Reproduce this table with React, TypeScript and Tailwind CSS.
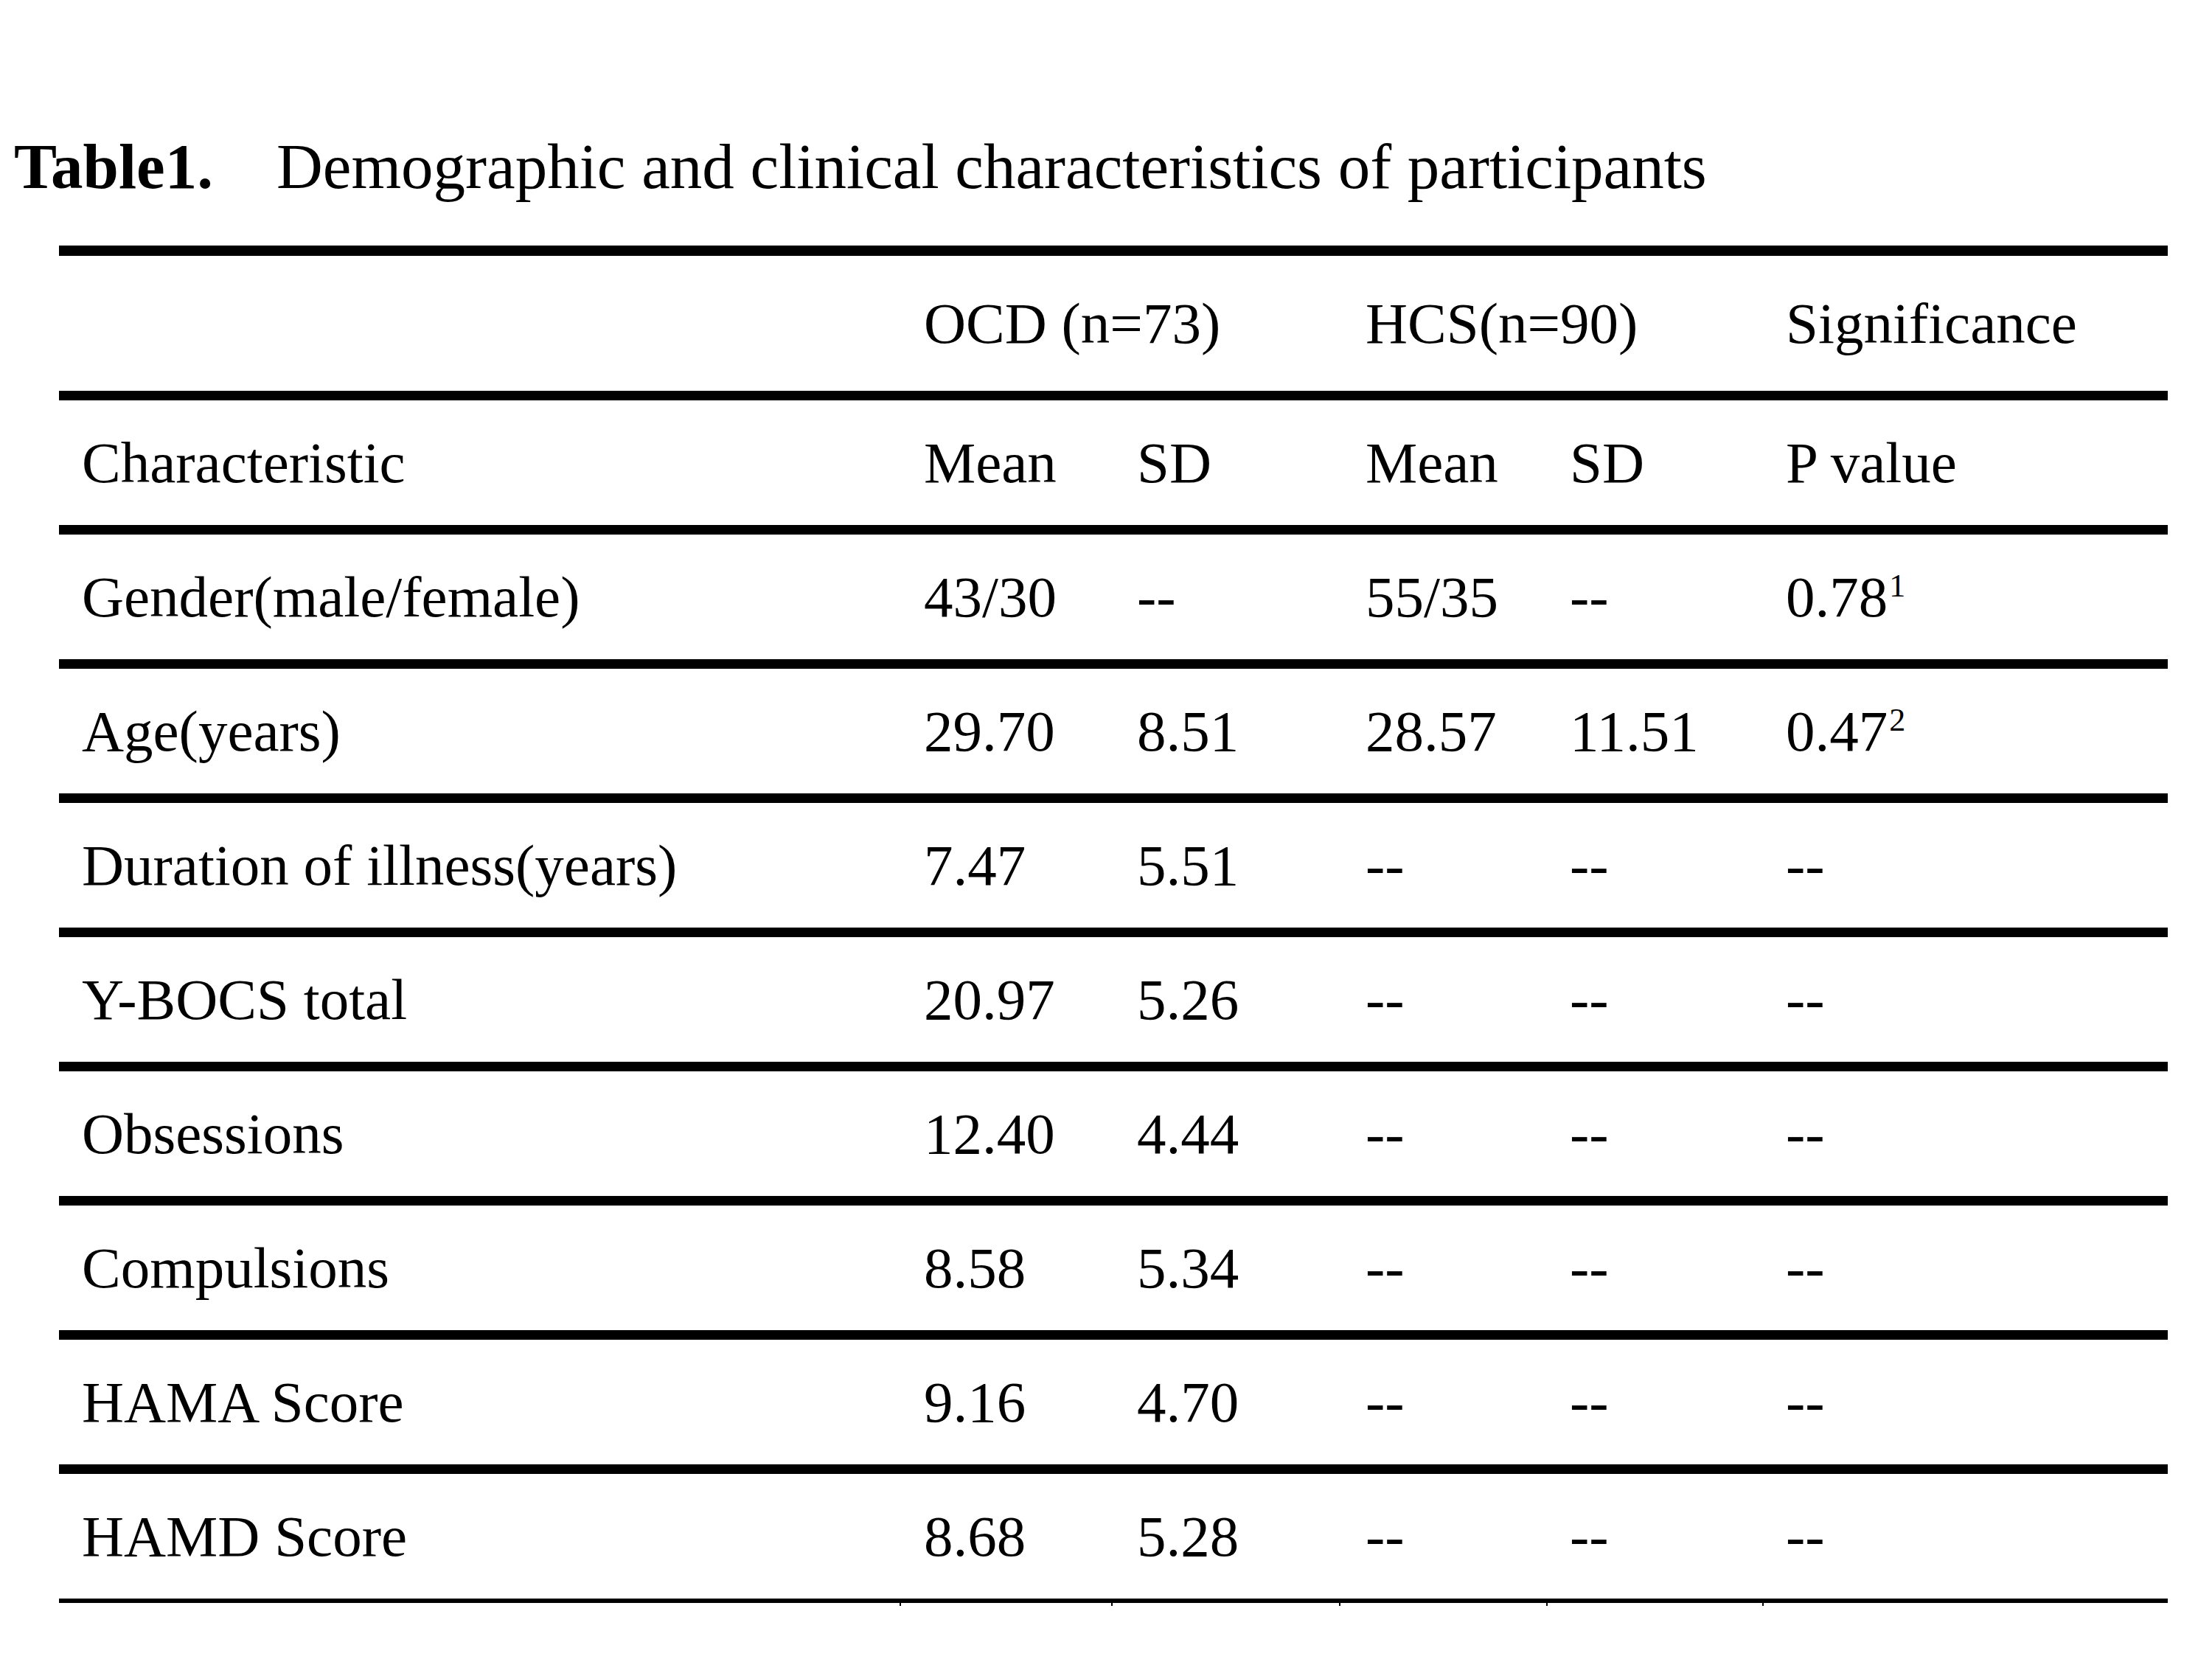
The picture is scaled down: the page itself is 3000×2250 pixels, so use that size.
import type { ReactNode } from 'react'

type Row = { label: string; cells: ReactNode[] }

const pad = ['pl-[31px]', 'pl-[33px]', 'pl-[35px]', 'pl-[36px]', 'pl-[32px]', 'pl-[32px]']

function Sup({ n }: { n: string }) {
  return <span className="relative -top-[27px] ml-[2px] align-baseline text-[44px]">{n}</span>
}

const rows: Row[] = [
  { label: 'Characteristic', cells: ['Mean', 'SD', 'Mean', 'SD', 'P value'] },
  { label: 'Gender(male/female)', cells: ['43/30', '--', '55/35', '--', <>0.78<Sup n="1" /></>] },
  { label: 'Age(years)', cells: ['29.70', '8.51', '28.57', '11.51', <>0.47<Sup n="2" /></>] },
  { label: 'Duration of illness(years)', cells: ['7.47', '5.51', '--', '--', '--'] },
  { label: 'Y-BOCS total', cells: ['20.97', '5.26', '--', '--', '--'] },
  { label: 'Obsessions', cells: ['12.40', '4.44', '--', '--', '--'] },
  { label: 'Compulsions', cells: ['8.58', '5.34', '--', '--', '--'] },
  { label: 'HAMA Score', cells: ['9.16', '4.70', '--', '--', '--'] },
  { label: 'HAMD Score', cells: ['8.68', '5.28', '--', '--', '--'] },
]

const grid = 'grid grid-cols-[1140px_287px_309px_281px_293px_550px]'

export default function App() {
  return (
    <div className="h-[2250px] w-[3000px] bg-white pt-[182px] font-['Liberation_Serif','Times_New_Roman',serif] text-black">
      <h1 className="ml-[19px] text-[87px] leading-none font-normal whitespace-nowrap">
        <span className="font-bold">Table1.</span>
        <span className="ml-[86px]">Demographic and clinical characteristics of participants</span>
      </h1>

      <div className="mt-[64px] ml-[80px] w-[2860px] border-t-[14px] border-black text-[79px] leading-none">
        {/* heights include the rule below (border-box) */}
        <div className={`${grid} h-[196px] border-b-[13px] border-black`}>
          <div />
          <div className="col-span-2 flex items-center pl-[33px] whitespace-nowrap">OCD (n=73)</div>
          <div className="col-span-2 flex items-center pl-[36px] whitespace-nowrap">HCS(n=90)</div>
          <div className="flex items-center pl-[32px] whitespace-nowrap">Significance</div>
        </div>

        {rows.map((r, i) => (
          <div
            key={r.label}
            className={`${grid} border-black ${i === rows.length - 1 ? 'h-[175px] border-b-[6px]' : 'h-[182px] border-b-[13px]'}`}
          >
            <div className={`flex items-center whitespace-nowrap ${pad[0]}`}>{r.label}</div>
            {r.cells.map((c, j) => (
              <div key={j} className={`flex items-center whitespace-nowrap ${pad[j + 1]}`}>
                <span>{c}</span>
              </div>
            ))}
          </div>
        ))}

        {/* little ticks under the bottom rule */}
        <div className={`${grid} h-[4px]`}>
          <div />
          <div className="border-l-2 border-black" />
          <div className="border-l-2 border-black" />
          <div className="border-l-2 border-black" />
          <div className="border-l-2 border-black" />
          <div className="border-l-2 border-black" />
        </div>
      </div>
    </div>
  )
}
